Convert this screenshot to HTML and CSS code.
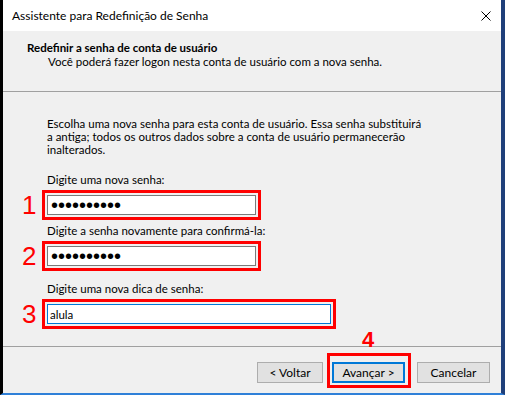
FILE: index.html
```html
<!DOCTYPE html>
<html lang="pt-BR">
<head>
  <meta charset="UTF-8">
  <title>Assistente para Redefinição de Senha</title>
  <link rel="stylesheet" href="styles.css">
</head>
<body>
  <div class="window">
    <!-- Barra de título -->
    <div class="titlebar">
      <span class="title">Assistente para Redefinição de Senha</span>
      <svg class="close" width="10" height="10" viewBox="0 0 10 10">
        <path d="M0.5 0.5L9.5 9.5M9.5 0.5L0.5 9.5" stroke="#000" stroke-width="1"/>
      </svg>
    </div>

    <div class="header">
      <h1>Redefinir a senha de conta de usuário</h1>
      <p>Você poderá fazer logon nesta conta de usuário com a nova senha.</p>
    </div>

    <div class="content">
      <p class="intro">Escolha uma nova senha para esta conta de usuário. Essa senha substituirá<br>a antiga; todos os outros dados sobre a conta de usuário permanecerão<br>inalterados.</p>

      <div class="field field-first">
        <label class="field-label">Digite uma nova senha:</label>
        <div class="field-row">
          <span class="step">1</span>
          <div class="mark">
            <input class="text-input" type="password" value="1234567890">
          </div>
        </div>
      </div>

      <div class="field">
        <label class="field-label">Digite a senha novamente para confirmá-la:</label>
        <div class="field-row">
          <span class="step">2</span>
          <div class="mark">
            <input class="text-input" type="password" value="1234567890">
          </div>
        </div>
      </div>

      <div class="field field-hint">
        <label class="field-label">Digite uma nova dica de senha:</label>
        <div class="field-row">
          <span class="step">3</span>
          <div class="mark">
            <input class="text-input text-input-wide focused" type="text" value="alula">
          </div>
        </div>
      </div>
    </div>

    <div class="footer">
      <button class="btn btn-back">&lt; Voltar</button>
      <div class="mark mark-btn">
        <span class="step step-btn">4</span>
        <button class="btn btn-primary">Avançar &gt;</button>
      </div>
      <button class="btn btn-cancel">Cancelar</button>
    </div>
  </div>
</body>
</html>
```

FILE: styles.css
```css
body {
  margin: 0;
  font-family: Lato, "Noto Sans", sans-serif;
  font-size: 11.5px;
  color: #000;
  background: #fff;
}
.window {
  width: 505px;
  height: 395px;
  box-sizing: border-box;
  border-left: 3px solid #000;
  border-right: 4px solid #1f3f7a;
  border-bottom: 2px solid #2f80d8;
  background-color: #f0f0f0;
  display: flex;
  flex-direction: column;
}
.titlebar {
  height: 31px;
  background: #fff;
  display: flex;
  align-items: center;
  padding-left: 9px;
  font-size: 12px;
  line-height: 15px;
}
.close {
  margin-left: auto;
  margin-right: 10px;
}
.header {
  padding: 9px 0 0 24px;
  box-sizing: border-box;
  height: 61px;
  border-bottom: 1px solid #a0a0a0;
}
.header h1 {
  margin: 0;
  font-size: 11.5px;
  font-weight: bold;
  line-height: 15px;
}
.header p {
  margin: 0 0 0 21px;
  line-height: 14px;
}
.content {
  flex: 1;
  padding: 25px 0 0 19px;
}
.intro {
  margin: 0 0 0 25px;
  line-height: 13px;
}
.field {
  margin-top: 3px;
}
.field-first {
  margin-top: 16px;
}
.field-hint {
  margin-top: 10px;
}
.field-label {
  display: block;
  margin: 0 0 3px 25px;
  line-height: 15px;
}
.field-label + .field-row {
  margin-top: 0;
}
.field-row {
  display: flex;
  align-items: center;
}
.step {
  width: 20px;
  font-family: "Liberation Sans", Arial, sans-serif;
  font-size: 26px;
  line-height: 1;
  color: #f00;
}
.mark {
  border: 3px solid #f00;
  padding: 2px;
}
.text-input {
  display: block;
  box-sizing: border-box;
  width: 209px;
  height: 20px;
  margin: 0;
  padding: 0 2px;
  border: 1px solid #7a7a7a;
  background: #fff;
  font-family: Lato, "Noto Sans", sans-serif;
  font-size: 11.5px;
  outline: none;
}
input[type="password"] {
  font-family: "Liberation Sans", Arial, sans-serif;
  font-size: 20px;
  padding-left: 3px;
}
.text-input-wide {
  width: 284px;
}
.focused {
  border-color: #0078d7;
}
/* Rodapé com os botões */
.footer {
  height: 47px;
  box-sizing: border-box;
  border-top: 1px solid #a0a0a0;
  padding: 6px 11px 0 0;
  display: flex;
  justify-content: flex-end;
  align-items: flex-start;
}
.btn {
  height: 21px;
  margin: 9px 0 0 0;
  padding: 0;
  border: 1px solid #adadad;
  background: #e1e1e1;
  font-family: Lato, "Noto Sans", sans-serif;
  font-size: 12px;
  color: #000;
}
.btn-back {
  width: 66px;
  margin-right: 4px;
}
.btn-cancel {
  width: 73px;
  margin-left: 6px;
}
.mark-btn {
  position: relative;
  padding: 6px 3px 2px 2px;
}
.btn-primary {
  display: block;
  width: 73px;
  margin: 0;
  border: 2px solid #0078d7;
}
.step-btn {
  position: absolute;
  left: 32px;
  top: -27px;
  font-size: 22px;
  font-weight: bold;
}
```
